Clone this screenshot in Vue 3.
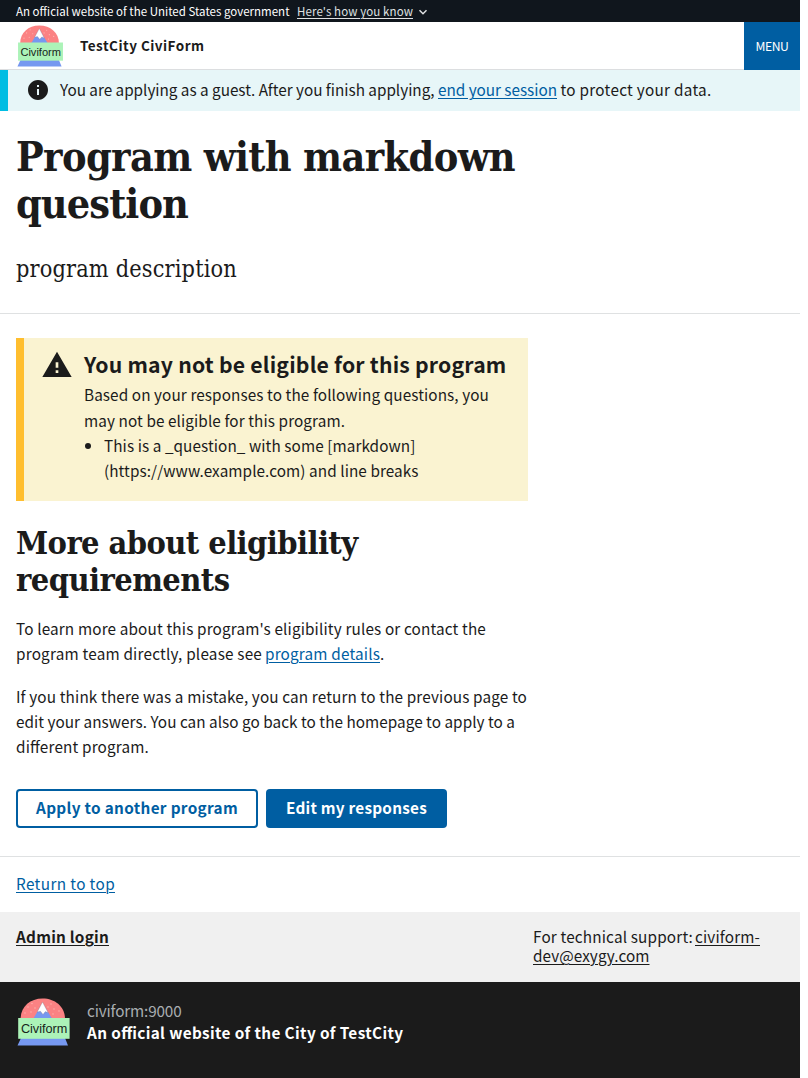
<script setup>
import { h } from 'vue'

// Tracks a line of text so that it occupies the given measure in pixels.
const vFit = {
  mounted(el, { value }) {
    const n = Array.from(el.textContent.trim()).length
    let spacing = 0
    for (let i = 0; i < 3; i++) {
      spacing += (value - el.getBoundingClientRect().width) / n
      el.style.letterSpacing = spacing.toFixed(4) + 'px'
    }
  },
}

const flakes = [[8, 15], [11, 9], [15, 5.5], [18, 10], [14, 14], [34, 6], [37, 11], [42, 13], [36, 16], [31, 9]]

const Logo = () =>
  h('svg', { viewBox: '0 0 54 48' }, [
    h('path', { d: 'M3.6 21C3.6 8.8 13 .6 25.6 .6S48 8.8 48 21Z', fill: '#fb8283' }),
    ...flakes.map(([cx, cy]) => h('circle', { cx, cy, r: 0.65, fill: '#fdb9b5' })),
    h('path', { d: 'M16.4 20.5L25.5 5L35 20.5Z', fill: '#7698f0' }),
    h('path', { d: 'M20.2 14L25.5 4L31.2 14.8L28.4 13.6L26 16.4L23.4 13.2Z', fill: '#fff', stroke: '#7a6b78', 'stroke-width': 0.3 }),
    h('path', { d: 'M4 40H48L51 47.6H.5Z', fill: '#7698f0' }),
    h('rect', { x: 1.2, y: 20, width: 51.4, height: 20.8, fill: '#acf3b8' }),
    h('text', {
      x: 3.9, y: 35, fill: '#17251b', textLength: 46.5, lengthAdjust: 'spacingAndGlyphs',
      style: { font: '12.6px "Liberation Sans", sans-serif' },
    }, 'Civiform'),
  ])
</script>

<template>
  <div class="page">
    <section class="gov">
      <span v-fit="273.5">An official website of the United States government</span>
      <a class="how" v-fit="116">Here's how you know</a>
      <svg class="chev" viewBox="0 0 10 8"><path d="M1.5 2.2L5 5.7L8.500 2.200" fill="none" stroke="#dfe1e2" stroke-width="1.5" /></svg>
    </section>

    <header class="header">
      <Logo class="logo-sm" />
      <strong class="title"><span v-fit="124.5">TestCity CiviForm</span></strong>
      <button class="menu"><span v-fit="33">MENU</span></button>
    </header>

    <section class="guest">
      <svg class="info" viewBox="0 0 24 24"><path fill="#1b1b1b" d="M12 2C6.480 2 2 6.480 2 12s4.480 10 10 10 10-4.480 10-10S17.520 2 12 2zm1 15h-2v-6h2v6zm0-8h-2V7h2v2z" /></svg>
      <p>
        <span v-fit="374.500">You are applying as a guest. After you finish applying,</span>
        <a v-fit="119">end your session</a>
        <span v-fit="151">to protect your data.</span>
      </p>
    </section>

    <section class="intro">
      <h1><span v-fit="499">Program with markdown</span><span v-fit="172">question</span></h1>
      <p><span v-fit="221">program description</span></p>
    </section>

    <main class="main">
      <section class="warning">
        <svg class="tri" viewBox="0 0 24 24"><path fill="#1b1b1b" d="M1 21h22L12 2 1 21zm12-3h-2v-2h2v2zm0-4h-2v-4h2v4z" /></svg>
        <div>
          <h3><span v-fit="422.500">You may not be eligible for this program</span></h3>
          <p><span v-fit="405">Based on your responses to the following questions, you</span><span v-fit="261">may not be eligible for this program.</span></p>
          <ul>
            <li><span v-fit="311.500">This is a _question_ with some [markdown]</span><span v-fit="314.500">(https://www.example.com) and line breaks</span></li>
          </ul>
        </div>
      </section>

      <h2><span v-fit="341.500">More about eligibility</span><span v-fit="213.500">requirements</span></h2>
      <p class="para">
        <span v-fit="470">To learn more about this program's eligibility rules or contact the</span>
        <span class="row"><span v-fit="246">program team directly, please see</span><a v-fit="115">program details</a><span>.</span></span>
      </p>
      <p class="para second">
        <span v-fit="511">If you think there was a mistake, you can return to the previous page to</span>
        <span v-fit="499">edit your answers. You can also go back to the homepage to apply to a</span>
        <span v-fit="133">different program.</span>
      </p>
      <div class="actions">
        <button class="btn outline"><span v-fit="202">Apply to another program</span></button>
        <button class="btn solid"><span v-fit="141">Edit my responses</span></button>
      </div>
    </main>

    <div class="top"><a v-fit="99">Return to top</a></div>

    <footer>
      <div class="links">
        <a class="admin" v-fit="93">Admin login</a>
        <div class="support">
          <span class="row"><span v-fit="160">For technical support:</span><a v-fit="65">civiform-</a></span>
          <a v-fit="116.500">dev@exygy.com</a>
        </div>
      </div>
      <div class="identity">
        <Logo class="logo-lg" />
        <div>
          <p class="domain"><span v-fit="94.500">civiform:9000</span></p>
          <p class="official"><span v-fit="316.500">An official website of the City of TestCity</span></p>
        </div>
      </div>
    </footer>
  </div>
</template>

<style>
body { background: #fff; }
</style>

<style scoped>
.page {
  width: 800px;
  height: 1078px;
  overflow: hidden;
  color: #1b1b1b;
  font-family: "Noto Sans CJK SC", "Noto Sans", sans-serif;
  font-feature-settings: "liga" 1;
  font-size: 15.3px;
  line-height: 25px;
}
h1, h2, h3, p, ul { margin: 0; padding: 0; }
span, a { white-space: nowrap; }
a { color: #005ea2; text-decoration: underline; text-decoration-thickness: 1px; text-underline-offset: 2px; text-decoration-skip-ink: auto; }
button { font-family: inherit; margin: 0; }

.gov { display: flex; align-items: center; height: 22px; padding-left: 16px; box-sizing: border-box; background: #10161d; color: #fff; font-size: 11.5px; line-height: 22px; }
.how { margin-left: 7.5px; color: #dfe1e2; }
.chev { width: 10px; height: 8px; margin: 2px 0 0 5px; }

.header { display: flex; align-items: center; height: 48px; box-sizing: border-box; border-bottom: 1px solid #dcdee0; }
.logo-sm { width: 47.2px; height: 42px; margin: 0 0 0 17px; }
.title { margin: 0 0 2px 15.8px; font-size: 13.5px; line-height: 20px; }
.menu { width: 56px; height: 48px; align-self: flex-start; flex: none; margin-left: auto; padding: 0; border: 0; background: #005ea2; color: #fff; font-size: 12.2px; }

.guest { display: flex; align-items: center; height: 41px; box-sizing: border-box; padding: 0 0 2px 18px; border-left: 8px solid #00bde3; background: #e7f6f8; }
.info { width: 24px; height: 24px; margin-right: 10px; }
.guest p { display: flex; gap: 3.5px; }

h1, h2, .intro p { font-family: "DejaVu Serif Condensed", "DejaVu Serif", serif; font-stretch: condensed; }
h1 span, h2 span, .warning p span, li span { display: block; width: max-content; }
.intro { height: 203px; box-sizing: border-box; padding: 23px 16px 0; border-bottom: 1px solid #dfe1e2; }
h1 { font-size: 41px; line-height: 47px; font-weight: 700; }
.intro p { margin-top: 25px; font-size: 23.3px; line-height: 32px; }

.main { width: 512px; height: 518px; padding: 24px 0 0 16px; }
.warning { display: flex; height: 163px; box-sizing: border-box; border-left: 8px solid #ffbe2e; padding-left: 15px; background: #faf3d1; }
.tri { width: 32px; height: 32px; margin: 11px 11px 0 2px; flex: none; }
h3 { font-size: 21.2px; line-height: 30px; padding-top: 11px; font-weight: 700; }
.warning p { padding-top: 2px; line-height: 26px; }
ul { padding-left: 20px; line-height: 25px; }
h2 { margin-top: 24px; font-size: 32.3px; line-height: 37px; font-weight: 700; }
.para { display: flex; flex-direction: column; align-items: flex-start; margin-top: 17px; }
.second { margin-top: 18px; }
.row { display: flex; }
.row a { margin-left: 3px; }
.actions { display: flex; gap: 8px; margin-top: 30px; }
.btn { height: 39px; border-radius: 4px; padding: 0 0 2px; box-sizing: border-box; font-size: 15.3px; line-height: 25px; font-weight: 700; }
.outline { width: 242px; border: 2px solid #005ea2; background: #fff; color: #005ea2; }
.solid { width: 181px; border: 0; background: #005ea2; color: #fff; }

.top { height: 56px; box-sizing: border-box; padding: 14px 16px 0; border-top: 1px solid #dfe1e2; }
.links { display: flex; align-items: flex-start; height: 70px; box-sizing: border-box; padding: 15px 0 0 16px; background: #f0f0f0; line-height: 19px; }
.links a { color: #1b1b1b; }
.admin { font-weight: 700; }
.support { display: flex; flex-direction: column; align-items: flex-start; width: 267px; margin-left: auto; }
.support .row a { margin-left: 2px; }
.identity { display: flex; height: 96px; box-sizing: border-box; padding: 16px 0 0 17px; background: #1b1b1b; color: #fff; line-height: 22px; }
.logo-lg { width: 54px; height: 48px; margin-right: 16px; }
.domain { padding-top: 1px; color: #a9aeb1; }
.official { font-weight: 700; }
</style>
